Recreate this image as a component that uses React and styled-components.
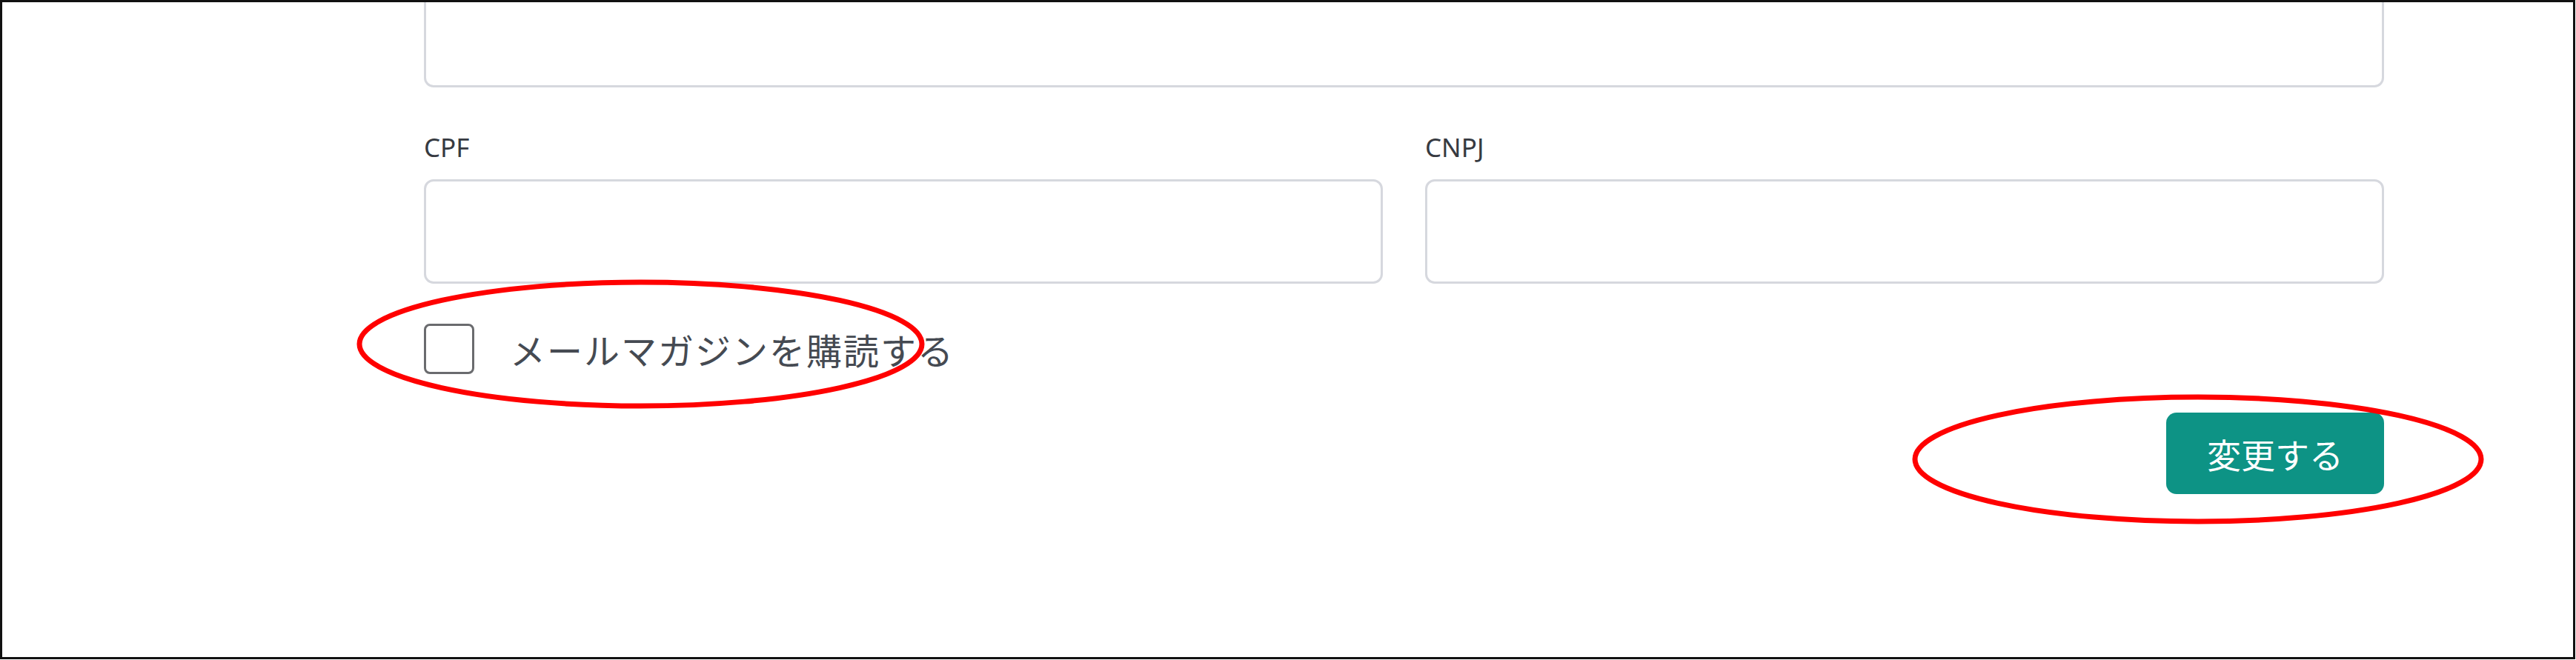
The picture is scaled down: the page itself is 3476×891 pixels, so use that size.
import React from "react";
import styled, { createGlobalStyle } from "styled-components";

const GlobalStyle = createGlobalStyle`
  html, body {
    margin: 0;
    padding: 0;
    background: #fff;
  }
  body {
    font-family: "Noto Sans", "Noto Sans CJK JP", sans-serif;
  }
`;

const Frame = styled.div`
  box-sizing: border-box;
  width: 3475px;
  height: 890px;
  border: 3px solid #111;
  overflow: hidden;
  background: #fff;
`;

const Form = styled.form`
  width: 2645px;
  margin-left: 569px;
  display: flex;
  flex-direction: column;
`;

const Box = styled.div`
  box-sizing: border-box;
  height: ${(p) => p.$height || 141}px;
  border: 3px solid #d6d8de;
  border-radius: 13px;
  background: #fff;
`;

const TopBox = styled(Box)`
  margin-top: -35px;
`;

const FieldRow = styled.div`
  display: grid;
  grid-template-columns: 1fr 1fr;
  column-gap: 57px;
  margin-top: 60px;
`;

const Field = styled.div`
  display: flex;
  flex-direction: column;
  gap: 22px;
`;

const Label = styled.label`
  font-family: "Noto Sans", "Noto Sans CJK JP", sans-serif;
  font-size: 35px;
  line-height: 42px;
  color: #363a41;
`;

const CheckRow = styled.div`
  position: relative;
  display: flex;
  align-items: center;
  gap: 48px;
  margin-top: 54px;
  height: 68px;
`;

const CheckBox = styled.span`
  box-sizing: border-box;
  width: 68px;
  height: 68px;
  border: 3px solid #6a6b6e;
  border-radius: 8px;
  background: #fff;
`;

const CheckLabel = styled.span`
  font-family: "Noto Sans CJK JP", sans-serif;
  font-size: 48px;
  letter-spacing: 2px;
  color: #454a52;
  line-height: 1;
`;

const Actions = styled.div`
  display: flex;
  justify-content: flex-end;
  margin-top: 52px;
`;

const ButtonWrap = styled.div`
  position: relative;
`;

const Submit = styled.button`
  height: 110px;
  padding: 0 55px;
  border: none;
  border-radius: 14px;
  background: #0d9385;
  color: #fff;
  font-family: "Noto Sans CJK JP", sans-serif;
  font-size: 46px;
  line-height: 1;
  cursor: pointer;
`;

const Mark = styled.svg`
  position: absolute;
  left: ${(p) => p.$left}px;
  top: ${(p) => p.$top}px;
  overflow: visible;
  pointer-events: none;
`;

function RedEllipse({ left, top, width, height }) {
  return (
    <Mark $left={left} $top={top} width={width} height={height}>
      <ellipse
        cx={width / 2}
        cy={height / 2}
        rx={width / 2 - 4}
        ry={height / 2 - 4}
        fill="none"
        stroke="#ff0000"
        strokeWidth="7"
      />
    </Mark>
  );
}

export default function App() {
  return (
    <>
      <GlobalStyle />
      <Frame>
        <Form onSubmit={(e) => e.preventDefault()}>
          <TopBox $height={150} />

          <FieldRow>
            <Field>
              <Label>CPF</Label>
              <Box />
            </Field>
            <Field>
              <Label>CNPJ</Label>
              <Box />
            </Field>
          </FieldRow>

          <CheckRow>
            <CheckBox />
            <CheckLabel>メールマガジンを購読する</CheckLabel>
            <RedEllipse left={-91} top={-60} width={767} height={175} />
          </CheckRow>

          <Actions>
            <ButtonWrap>
              <Submit type="submit">変更する</Submit>
              <RedEllipse left={-343} top={-25} width={772} height={176} />
            </ButtonWrap>
          </Actions>
        </Form>
      </Frame>
    </>
  );
}
